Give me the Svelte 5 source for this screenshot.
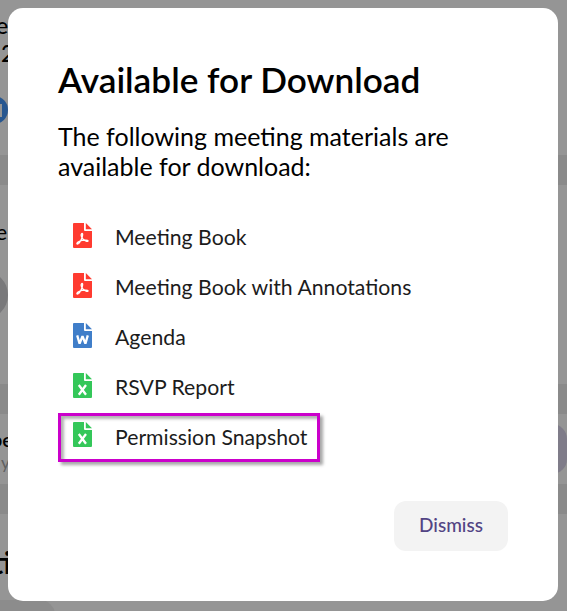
<script>
    let open = true;

    const materials = [
        { name: 'Meeting Book', type: 'pdf' },
        { name: 'Meeting Book with Annotations', type: 'pdf' },
        { name: 'Agenda', type: 'word' },
        { name: 'RSVP Report', type: 'excel' },
        { name: 'Permission Snapshot', type: 'excel', highlight: true }
    ];

    function dismiss() {
        open = false;
    }
</script>

<main>
    <!-- Page behind the modal -->
    <div class="page">
        <section class="card intro">
            <div class="intro-title">e</div>
            <div class="intro-title">2</div>
            <div class="intro-badge"><span></span></div>
        </section>
        <section class="card host">
            <div class="host-name">e</div>
            <div class="avatar"></div>
        </section>
        <section class="card member">
            <div>
                <div class="member-name">pe</div>
                <div class="member-note">y</div>
            </div>
            <div class="pill"></div>
        </section>
        <section class="card details">
            <div class="details-title">ti</div>
            <div class="details-tab"></div>
        </section>
    </div>

    {#if open}
        <div class="overlay">
            <div class="modal" role="dialog" aria-labelledby="download-title">
                <h1 id="download-title">Available for Download</h1>
                <p>The following meeting materials are available for download:</p>

                <ul>
                    {#each materials as item}
                        <li class:highlight={item.highlight}>
                            <svg class={item.type} viewBox="0 0 19 25" width="19" height="25">
                                <path class="sheet" d="M1 0H11V7Q11 8 12 8H19V24Q19 25 18 25H1Q0 25 0 24V1Q0 0 1 0Z" />
                                <path class="sheet" d="M12.8 0L19 6.2H12.8Z" />
                                {#if item.type == 'pdf'}
                                    <path class="mark" d="M8.7 10.6C10.2 9.7 9.7 13.1 8.7 15.4C7.8 17.6 5.8 21.1 4.2 21C2.8 20.2 6.2 18 9.2 17.4C12 16.8 15.2 16.9 15 18.1C14.2 19.1 11.3 17.5 9.9 15.8C8.6 14.1 7.8 11.5 8.7 10.6Z" />
                                {:else if item.type == 'word'}
                                    <path class="letter" d="M4.2 12.4L6.6 20.7L9.5 13.2L12.4 20.7L14.8 12.4" />
                                {:else}
                                    <path class="letter" d="M5.8 12L13 21.8M13 12L5.8 21.8" />
                                {/if}
                            </svg>
                            <span>{item.name}</span>
                        </li>
                    {/each}
                </ul>

                <div class="modal-footer">
                    <button type="button" on:click={dismiss}>Dismiss</button>
                </div>
            </div>
        </div>
    {/if}
</main>

<style>
    :global(body) {
        margin: 0;
        overflow: hidden;
    }
    main {
        position: relative;
        height: 611px;
        overflow: hidden;
        font-family: Lato, "Liberation Sans", sans-serif;
        color: #000;
    }

    .page {
        display: flex;
        flex-direction: column;
        gap: 30px;
        height: 611px;
        background: #8a8a8a;
    }
    .card {
        box-sizing: border-box;
        flex: none;
        background: #959595;
        overflow: hidden;
    }
    .intro {
        height: 155px;
        padding-top: 11px;
    }
    .intro-title {
        width: 10px;
        margin-left: -4px;
        font-size: 23px;
        font-weight: 500;
        line-height: 28px;
    }
    .intro-title + .intro-title {
        margin-left: 1px;
    }
    .intro-badge {
        display: flex;
        align-items: center;
        justify-content: flex-end;
        box-sizing: border-box;
        width: 28px;
        height: 28px;
        margin: 29px 0 0 -20px;
        padding-right: 6px;
        border-radius: 50%;
        background: #285790;
    }
    .intro-badge span {
        width: 12px;
        height: 9px;
        border: 2px solid #959595;
    }
    .host {
        height: 199px;
        padding-top: 35px;
    }
    .host-name {
        margin-left: -4px;
        font-size: 21px;
        line-height: 24px;
    }
    .avatar {
        width: 48px;
        height: 48px;
        margin: 27px 0 0 -40px;
        border-radius: 50%;
        background: #79797b;
    }
    .member {
        display: flex;
        justify-content: space-between;
        height: 70px;
        padding-top: 10px;
    }
    .member-name {
        margin-left: -9px;
        font-size: 20px;
        font-weight: 600;
        line-height: 30px;
    }
    .member-note {
        margin-left: 1px;
        font-size: 17px;
        line-height: 18px;
        color: #606060;
    }
    .pill {
        width: 60px;
        height: 50px;
        border-radius: 15px;
        background: #7f7c89;
    }
    .details {
        height: 97px;
        padding-top: 30px;
    }
    .details-title {
        margin-left: -8px;
        font-size: 30px;
        font-weight: 700;
        line-height: 36px;
    }
    .details-tab {
        width: 55px;
        height: 30px;
        margin-top: 20px;
        border-radius: 0 15px 0 0;
        background: #8c8c8c;
    }

    .overlay {
        position: absolute;
        inset: 0;
        padding: 7.5px 9px 10px 8px;
    }
    .modal {
        box-sizing: border-box;
        height: 593.5px;
        padding: 49px 50px 50px;
        border-radius: 15px;
        background: #fff;
    }
    h1 {
        margin: 0;
        font-size: 35.2px;
        font-weight: 600;
        line-height: 45px;
    }
    p {
        margin: 19px 0 0;
        font-size: 25px;
        line-height: 30px;
    }
    ul {
        display: flex;
        flex-direction: column;
        align-items: flex-start;
        margin: 32px 0 0;
        padding: 0;
        list-style: none;
    }
    li {
        display: flex;
        align-items: center;
        box-sizing: border-box;
        height: 50px;
        padding: 0 13px 0 15px;
        font-size: 21.22px;
        color: #1c1c1c;
    }
    li span {
        margin: -2px 0 0 23px;
        white-space: nowrap;
    }
    li svg {
        margin-top: -5px;
    }
    .highlight {
        height: 49px;
        padding: 0 10px 0 12px;
        border: 3px solid #cb00cb;
        box-shadow: 3px 3px 3px rgba(0, 0, 0, 0.35), inset 3px 3px 3px rgba(0, 0, 0, 0.3);
    }
    .highlight span {
        margin-top: 0;
    }
    .pdf .sheet {
        fill: #ff3b30;
    }
    .word .sheet {
        fill: #407ec9;
    }
    .excel .sheet {
        fill: #34c759;
    }
    .mark {
        fill: none;
        stroke: #fff;
        stroke-width: 1.3;
    }
    .letter {
        fill: none;
        stroke: #fff;
        stroke-width: 2.3;
        stroke-linejoin: bevel;
    }
    .modal-footer {
        display: flex;
        justify-content: flex-end;
        margin-top: 39px;
    }
    button {
        width: 114px;
        height: 50px;
        padding: 0 0 2px;
        border: 0;
        border-radius: 12px;
        background: #f3f3f3;
        font-family: inherit;
        font-size: 19px;
        font-weight: 500;
        color: #524484;
    }
</style>
